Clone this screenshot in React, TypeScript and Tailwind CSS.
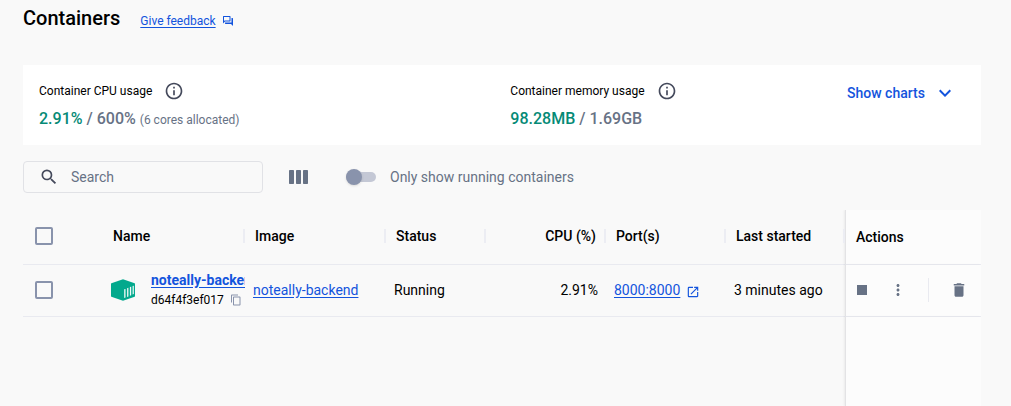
import { useState } from 'react';
import {
  MdContentCopy,
  MdDelete,
  MdExpandMore,
  MdInfoOutline,
  MdMoreVert,
  MdOpenInNew,
  MdOutlineForum,
  MdSearch,
  MdStop,
} from 'react-icons/md';

const checkboxClass =
  'block size-[18px] appearance-none rounded-[2px] border-2 border-[#8993ac] checked:border-[#1354dd] checked:bg-[#1354dd]';

function ContainerIcon() {
  return (
    <svg viewBox="0 0 24 22" className="h-[22px] w-6 shrink-0" aria-hidden="true">
      <path d="M12 .3 23.6 4.3q.4.2.4.6v12.3q0 .4-.4.6L12 21.7.4 17.8q-.4-.2-.4-.6V4.9q0-.4.4-.6Z" fill="#03a98d" />
      <path
        d="M13.2 10.3l1.3-.4v8.7l-1.3.5zM16.1 9.2l1.3-.4v8.7l-1.3.5zM18.9 8.1l1.3-.4v8.5l-1.3.5zM21.6 7.1l1.2-.4v8.2l-1.2.5z"
        fill="#f0faf8"
      />
    </svg>
  );
}

function ColumnsIcon() {
  return (
    <svg viewBox="0 0 19 14" className="h-[14px] w-[19px]" fill="#677285" aria-hidden="true">
      <rect width="5" height="14" rx=".7" />
      <rect x="7" width="5" height="14" rx=".7" />
      <rect x="14" width="5" height="14" rx=".7" />
    </svg>
  );
}

function Usage({ label, used, total, note }: { label: string; used: string; total: string; note?: string }) {
  return (
    <div>
      <div className="flex h-5 items-center gap-3 text-xs">
        <span>{label}</span>
        <button type="button" aria-label={`About ${label}`}>
          <MdInfoOutline className="size-5 text-[#44495b]" />
        </button>
      </div>
      <p className="mt-1 text-base leading-7 font-medium text-[#677285]">
        <span className="text-[#058a76]">{used}</span> / {total}
        {note && <span className="ml-1 text-xs font-normal">{note}</span>}
      </p>
    </div>
  );
}

function HeadCell({ children, right }: { children: string; right?: boolean }) {
  return (
    <th scope="col" className="border-b border-[#e9eaf0] p-0 font-medium">
      <div className="flex h-[54px] items-center pb-[2px]">
        <span className={right ? 'flex-1 pr-2 text-right' : 'flex-1 pl-[10px] text-left'}>{children}</span>
        <span className="h-[14px] w-[2px] bg-[#ecedf3]" />
      </div>
    </th>
  );
}

const cell = 'h-[52px] border-b border-[#e9eaf0] px-2 pt-0 pb-[2px]';
const link = 'text-[#1354dd] underline underline-offset-2';
const panel = 'border-l border-l-[#e3e3e5] bg-[#fcfcfc] shadow-[-1px_0_2px_rgba(0,0,0,0.06)]';

export default function App() {
  const [running, setRunning] = useState(false);
  const [query, setQuery] = useState('');

  return (
    <div className="flex min-h-screen flex-col bg-[#f9f9f9] pr-[30px] pl-[23px] font-['Roboto','Liberation_Sans',sans-serif] text-sm text-black">
      <header className="flex h-[65px] items-start gap-5 pt-1">
        <h1 className="text-xl leading-7 font-medium">Containers</h1>
        <a href="#feedback" className="mt-[7px] flex items-center gap-[6px] text-xs leading-5 text-[#1354dd]">
          <span className="underline underline-offset-2">Give feedback</span>
          <MdOutlineForum className="size-3" />
        </a>
      </header>

      <section className="grid h-20 grid-cols-[7fr_5fr_auto] bg-white p-4">
        <Usage label="Container CPU usage" used="2.91%" total="600%" note="(6 cores allocated)" />
        <Usage label="Container memory usage" used="98.28MB" total="1.69GB" />
        <button type="button" className="flex h-6 w-[118px] items-center gap-2 font-medium text-[#1354dd]">
          Show charts
          <MdExpandMore className="size-6" />
        </button>
      </section>

      <div className="mt-4 flex h-8 items-center">
        <label className="flex h-8 w-60 items-center gap-3 rounded border border-[#e1e2e6] pl-[15px]">
          <MdSearch className="size-5 shrink-0 text-[#44495b]" />
          <input
            type="search"
            aria-label="Search"
            placeholder="Search"
            value={query}
            onChange={(e) => setQuery(e.target.value)}
            className="w-full min-w-0 bg-transparent outline-none placeholder:text-[#677285]"
          />
        </label>
        <button type="button" aria-label="Choose columns" className="ml-[26px]">
          <ColumnsIcon />
        </button>
        <label className="ml-[38px] flex items-center gap-[14px] text-[#677285]">
          <input
            type="checkbox"
            role="switch"
            checked={running}
            onChange={(e) => setRunning(e.target.checked)}
            className="flex h-[10px] w-[30px] appearance-none items-center rounded-full bg-[#c4c8d5] before:size-4 before:shrink-0 before:rounded-full before:bg-[#8993ac] before:shadow-sm checked:justify-end"
          />
          Only show running containers
        </label>
      </div>

      <div className="mt-[17px] flex flex-1 flex-col overflow-hidden">
        <table className="w-full table-fixed border-separate border-spacing-0">
          <colgroup>
            <col className="w-20" />
            <col />
            <col className="w-[141px]" />
            <col className="w-[100px]" />
            <col className="w-[120px]" />
            <col className="w-[120px]" />
            <col className="w-[119px]" />
            <col className="w-[136px]" />
          </colgroup>
          <thead>
            <tr>
              <th scope="col" className="border-b border-[#e9eaf0] pt-0 pr-0 pb-[2px] pl-3">
                <input type="checkbox" aria-label="Select all containers" className={checkboxClass} />
              </th>
              <HeadCell>Name</HeadCell>
              <HeadCell>Image</HeadCell>
              <HeadCell>Status</HeadCell>
              <HeadCell right>CPU (%)</HeadCell>
              <HeadCell>Port(s)</HeadCell>
              <HeadCell>Last started</HeadCell>
              <th scope="col" className={`border-b border-b-[#e9eaf0] px-[10px] py-0 text-left font-medium ${panel}`}>
                Actions
              </th>
            </tr>
          </thead>
          <tbody>
            <tr>
              <td className="h-[52px] border-b border-[#e9eaf0] pt-0 pr-0 pb-[2px] pl-3">
                <input type="checkbox" aria-label="Select noteally-backend" className={checkboxClass} />
              </td>
              <td className="h-[52px] border-b border-[#e9eaf0] pt-0 pr-0 pb-[2px] pl-2">
                <div className="flex items-center gap-4">
                  <ContainerIcon />
                  <div className="min-w-0 flex-1">
                    <a href="#container" className={`block overflow-hidden leading-5 font-bold whitespace-nowrap ${link}`}>
                      noteally-backend
                    </a>
                    <div className="flex items-center gap-[6px] text-xs leading-5">
                      d64f4f3ef017
                      <button type="button" aria-label="Copy container ID">
                        <MdContentCopy className="size-3 text-[#8993ac]" />
                      </button>
                    </div>
                  </div>
                </div>
              </td>
              <td className={cell}>
                <a href="#image" className={link}>
                  noteally-backend
                </a>
              </td>
              <td className={cell}>Running</td>
              <td className={`text-right ${cell}`}>2.91%</td>
              <td className={cell}>
                <a href="#port" className="flex items-center gap-[6px] text-[#1354dd]">
                  <span className="underline underline-offset-2">8000:8000</span>
                  <MdOpenInNew className="mt-1 size-[14px]" />
                </a>
              </td>
              <td className={`whitespace-nowrap ${cell}`}>3 minutes ago</td>
              <td className={`border-b border-b-[#e9eaf0] px-0 pt-0 pb-[2px] ${panel}`}>
                <div className="flex items-center pl-[6px] text-[#677285]">
                  <button type="button" aria-label="Stop">
                    <MdStop className="size-5" />
                  </button>
                  <button type="button" aria-label="More actions" className="ml-[17px]">
                    <MdMoreVert className="size-[18px]" />
                  </button>
                  <span className="ml-[21px] h-6 w-px bg-[#e9eaf0]" />
                  <button type="button" aria-label="Delete" className="ml-[21px]">
                    <MdDelete className="size-[18px]" />
                  </button>
                </div>
              </td>
            </tr>
          </tbody>
        </table>
        <div className="flex flex-1 justify-end">
          <div className={`w-[136px] ${panel}`} />
        </div>
      </div>
    </div>
  );
}
